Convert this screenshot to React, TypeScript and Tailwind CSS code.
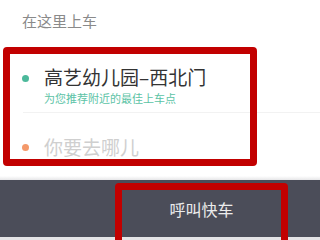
export default function App() {
  const font = { fontFamily: '"Noto Sans CJK SC", "Noto Sans", sans-serif' };
  return (
    <div className="relative w-[320px] h-[240px] overflow-hidden bg-white" style={font}>
      <div className="h-[42px] pl-[22px] pt-[9px] text-[15px] leading-[24px] text-[#8a8a8a]">在这里上车</div>

      <div className="h-[134px] bg-white">
        <div className="flex items-start pl-[22px] pt-[20px] h-[70px]">
          <span className="mt-[13px] w-[7px] h-[7px] rounded-full bg-[#4cb99b] shrink-0" />
          <div className="ml-[15px] flex flex-col">
            <span className="text-[19px] leading-[28px] mt-[1px] text-[#333]">高艺幼儿园–西北门</span>
            <span className="text-[11px] leading-[14px] text-[#5cc3a6]">为您推荐附近的最佳上车点</span>
          </div>
        </div>
        <div className="ml-[23px] h-px bg-[#f2f2f2]" />
        <div className="flex items-center pl-[22px] pt-[19px]">
          <span className="w-[7px] h-[7px] rounded-full bg-[#f4996a] shrink-0" />
          <span className="ml-[15px] text-[19px] leading-[30px] text-[#cfcfcf]">你要去哪儿</span>
        </div>
      </div>

      <div className="h-[4px] bg-gradient-to-b from-white to-[#e6e6e8]" />
      <div className="h-[57px] bg-[#4b4d59] flex">
        <div className="w-[115px]" />
        <div className="w-[173px] flex items-center justify-center pt-[1px] text-[16px] text-[#ececec]">呼叫快车</div>
      </div>
      <div className="h-[3px] bg-[#e4e4e6]" />

      <div className="absolute left-[3px] top-[47px] w-[254px] h-[119px] border-[7px] border-[#c20000] rounded-[4px]" />
      <div className="absolute left-[115px] top-[183px] w-[173px] h-[70px] border-[7px] border-[#c20000] rounded-[4px]" />
    </div>
  );
}
